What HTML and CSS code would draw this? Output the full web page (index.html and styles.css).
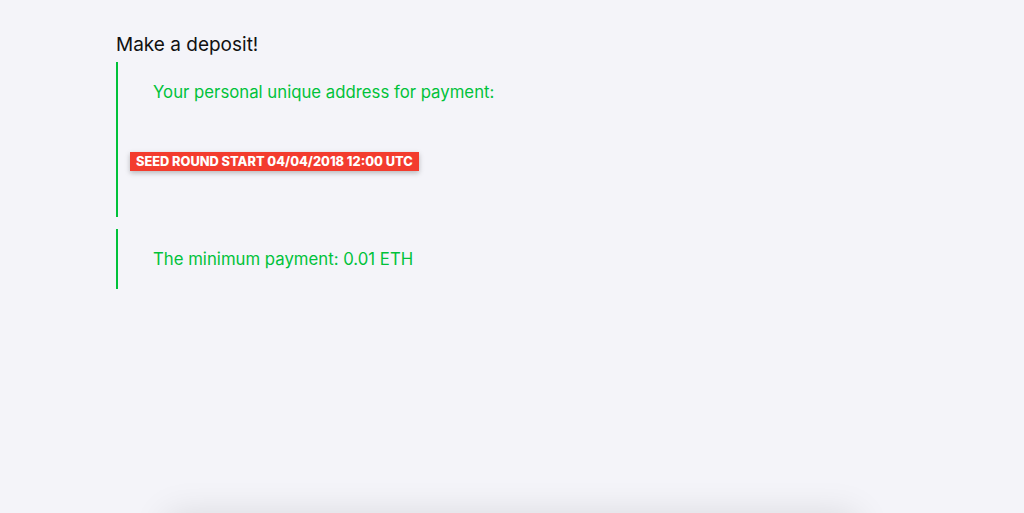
FILE: index.html
```html
<!DOCTYPE html>
<html>
<head>
<meta charset="utf-8">
<link rel="stylesheet" href="styles.css">
</head>
<body>
<main class="page">
  <section class="deposit">
    <h2 class="title">Make a deposit!</h2>
    <div class="note note-address">
      <p class="note-text">Your personal unique address for payment:</p>
      <span class="badge">SEED ROUND START 04/04/2018 12:00 UTC</span>
    </div>
    <div class="note note-min">
      <p class="note-text">The minimum payment: 0.01 ETH</p>
    </div>
  </section>
  <div class="card"></div>
</main>
</body>
</html>
```
FILE: styles.css
```css
html, body {
  margin: 0;
  padding: 0;
  background: #f4f4f9;
  overflow: hidden;
}
body {
  font-family: Inter, "Noto Sans", sans-serif;
  color: #111;
}
.page {
  display: flex;
  flex-direction: column;
}
.deposit {
  padding: 32px 0 0 116px;
}
.title {
  margin: 0;
  font-size: 19px;
  font-weight: 400;
  line-height: 26px;
  height: 30px;
}
.note {
  border-left: 2px solid #00c23a;
  display: flex;
  flex-direction: column;
  align-items: flex-start;
}
.note-text {
  margin: 0;
  padding-left: 35px;
  color: #00c23a;
  font-size: 16.75px;
  line-height: 20px;
}
.note-address {
  padding: 20px 0 46px;
}
.badge {
  margin: 50px 0 0 12px;
  background: #f33c2e;
  color: #fff;
  font-size: 12.8px;
  font-weight: 800;
  line-height: 19px;
  height: 19px;
  padding: 0 6px;
  box-shadow: 0 2px 5px rgba(0, 0, 0, 0.25);
  white-space: nowrap;
}
.note-min {
  margin-top: 12px;
  padding: 20px 0;
}
.card {
  margin: 226px auto 0;
  width: 690px;
  height: 200px;
  background: #f4f4f9;
  box-shadow: 0 0 34px rgba(0, 0, 0, 0.12);
}
```
